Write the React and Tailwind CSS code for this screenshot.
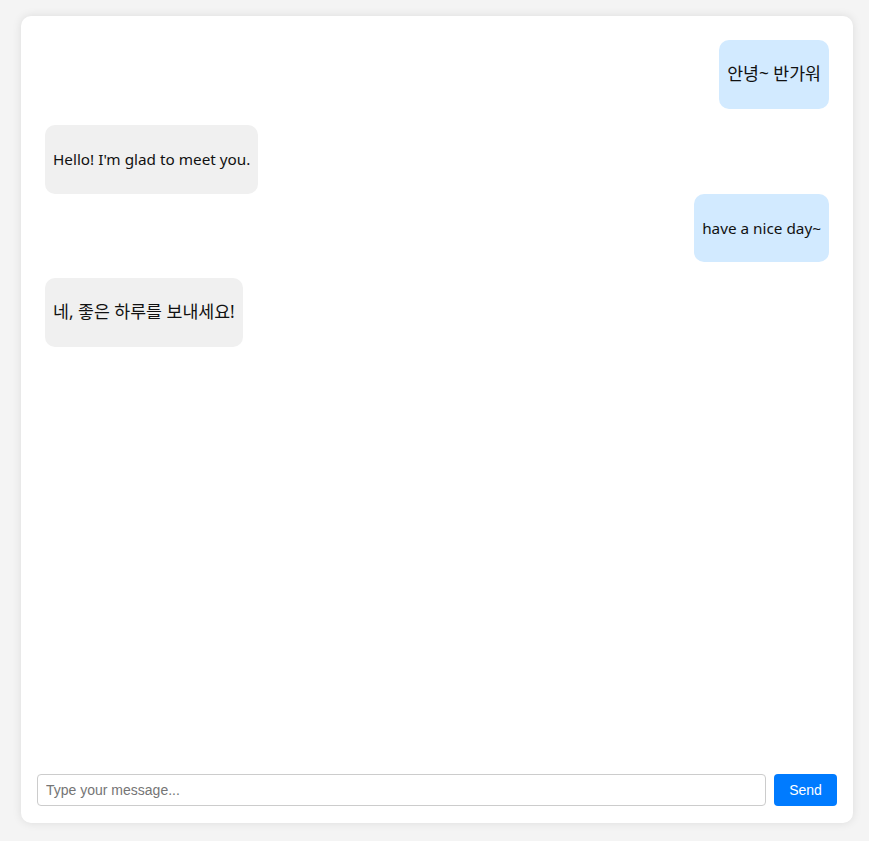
const messages = [
  { id: 1, text: "안녕~ 반가워", mine: true, ko: true, gap: "mt-0" },
  { id: 2, text: "Hello! I'm glad to meet you.", mine: false, ko: false, gap: "mt-[16.5px]" },
  { id: 3, text: "have a nice day~", mine: true, ko: false, gap: "mt-0" },
  { id: 4, text: "네, 좋은 하루를 보내세요!", mine: false, ko: true, gap: "mt-4" },
];

const Bubble = ({ message }) => (
  <div className={`flex ${message.mine ? "justify-end" : "justify-start"} ${message.gap}`}>
    <div
      className={`rounded-[10px] px-2 py-[22px] leading-[24.5px] text-[#111] ${
        message.ko ? "text-[17.3px]" : "text-[15.3px]"
      } ${message.mine ? "bg-[#d2eaff]" : "bg-[#f0f0f0]"}`}
    >
      {message.text}
    </div>
  </div>
);

export default function App() {
  return (
    <div
      className="min-h-[841px] bg-[#f4f4f4] pt-4 pl-[21px]"
      style={{ fontFamily: '"Noto Sans", "Noto Sans CJK KR", sans-serif' }}
    >
      <div className="flex h-[807px] w-[832px] flex-col rounded-[10px] bg-white shadow-[0_0_10px_rgba(0,0,0,0.1)]">
        {/* Messages */}
        <div className="flex-1 overflow-y-auto px-6 pt-6">
          {messages.map((m) => (
            <Bubble key={m.id} message={m} />
          ))}
        </div>

        {/* Input */}
        <div className="flex gap-2 px-4 pb-[17px]">
          <input
            type="text"
            placeholder="Type your message..."
            className="h-8 flex-1 rounded-[4px] border border-[#ccc] px-2 text-sm text-black outline-none placeholder:text-[#757575]"
            style={{ fontFamily: '"Liberation Sans", Arial, sans-serif' }}
          />
          <button
            className="h-8 w-[63px] rounded-[4px] bg-[#007bff] text-sm text-white"
            style={{ fontFamily: '"Liberation Sans", Arial, sans-serif' }}
          >
            Send
          </button>
        </div>
      </div>
    </div>
  );
}
